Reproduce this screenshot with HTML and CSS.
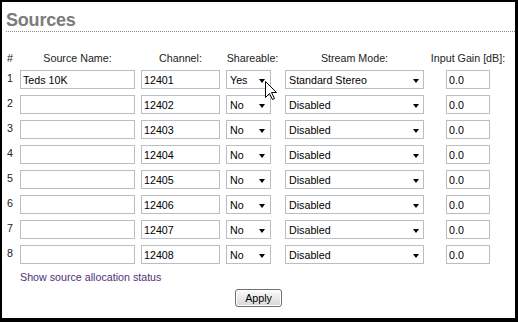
FILE: index.html
```html
<!DOCTYPE html>
<html>
<head>
<meta charset="utf-8">
<link rel="stylesheet" href="styles.css">
</head>
<body>
<div class="frame">
  <h1 class="title">Sources</h1>
  <form class="sources">
    <div class="grid">
      <span class="hd hd-num">#</span>
      <span class="hd">Source Name:</span>
      <span class="hd">Channel:</span>
      <span class="hd">Shareable:</span>
      <span class="hd">Stream Mode:</span>
      <span class="hd">Input Gain [dB]:</span>

      <span class="num">1</span>
      <input class="in in-name" value="Teds 10K">
      <input class="in in-chan" value="12401">
      <span class="sel sel-share"><select><option>Yes</option></select></span>
      <span class="sel sel-mode"><select><option>Standard Stereo</option></select></span>
      <input class="in in-gain" value="0.0">

      <span class="num">2</span>
      <input class="in in-name" value="">
      <input class="in in-chan" value="12402">
      <span class="sel sel-share"><select><option>No</option></select></span>
      <span class="sel sel-mode"><select><option>Disabled</option></select></span>
      <input class="in in-gain" value="0.0">

      <span class="num">3</span>
      <input class="in in-name" value="">
      <input class="in in-chan" value="12403">
      <span class="sel sel-share"><select><option>No</option></select></span>
      <span class="sel sel-mode"><select><option>Disabled</option></select></span>
      <input class="in in-gain" value="0.0">

      <span class="num">4</span>
      <input class="in in-name" value="">
      <input class="in in-chan" value="12404">
      <span class="sel sel-share"><select><option>No</option></select></span>
      <span class="sel sel-mode"><select><option>Disabled</option></select></span>
      <input class="in in-gain" value="0.0">

      <span class="num">5</span>
      <input class="in in-name" value="">
      <input class="in in-chan" value="12405">
      <span class="sel sel-share"><select><option>No</option></select></span>
      <span class="sel sel-mode"><select><option>Disabled</option></select></span>
      <input class="in in-gain" value="0.0">

      <span class="num">6</span>
      <input class="in in-name" value="">
      <input class="in in-chan" value="12406">
      <span class="sel sel-share"><select><option>No</option></select></span>
      <span class="sel sel-mode"><select><option>Disabled</option></select></span>
      <input class="in in-gain" value="0.0">

      <span class="num">7</span>
      <input class="in in-name" value="">
      <input class="in in-chan" value="12407">
      <span class="sel sel-share"><select><option>No</option></select></span>
      <span class="sel sel-mode"><select><option>Disabled</option></select></span>
      <input class="in in-gain" value="0.0">

      <span class="num">8</span>
      <input class="in in-name" value="">
      <input class="in in-chan" value="12408">
      <span class="sel sel-share"><select><option>No</option></select></span>
      <span class="sel sel-mode"><select><option>Disabled</option></select></span>
      <input class="in in-gain" value="0.0">
    </div>
    <a class="status-link" href="#">Show source allocation status</a>
    <div class="actions"><button type="button" class="btn">Apply</button></div>
  </form>
  <svg class="cursor" width="13" height="20" viewBox="0 0 13 20">
    <polygon points="0.5,0.5 0.5,16.5 4.5,12.5 7.5,18.5 9.5,17.5 6.5,11.5 11.5,11.5" fill="#fff" stroke="#000" stroke-width="1" stroke-linejoin="miter"/>
  </svg>
</div>
</body>
</html>
```
FILE: styles.css
```css
* { box-sizing: border-box; }
html, body { margin: 0; padding: 0; background: #000; }
body { width: 518px; height: 322px; overflow: hidden; }

.frame {
  position: relative;
  width: 518px;
  height: 322px;
  background: #fff;
  border-style: solid;
  border-color: #000;
  border-width: 2px 3px 4px 2px;
  padding-top: 7px;
  font-family: "Liberation Sans", Arial, sans-serif;
  font-size: 10.7px;
  color: #222;
}

.title {
  margin: 0 0 0 4px;
  font-size: 18px;
  line-height: 22px;
  font-weight: bold;
  color: #7b7b7b;
  letter-spacing: -0.2px;
  border-bottom: 1px dotted #8a8a8a;
}

.sources {
  margin: 20px 0 0 0;
  padding-left: 5px;
}

.grid {
  display: grid;
  grid-template-columns: 7px 115px 79px 53px 139px 76px;
  column-gap: 6px;
  row-gap: 6px;
  grid-auto-rows: auto;
}

.hd {
  line-height: 12px;
  text-align: center;
  white-space: nowrap;
  color: #222;
}
.hd-num { text-align: left; }

.num {
  line-height: 13px;
  padding-top: 2px;
  color: #222;
}

.in {
  height: 19px;
  margin: 0;
  border: 1px solid #babec3;
  padding: 1px 2px 0 2px;
  font-family: "Liberation Sans", Arial, sans-serif;
  font-size: 10.7px;
  color: #000;
  background: #fff;
  outline: none;
}
.in-name { width: 115px; }
.in-chan { width: 79px; }
.in-gain { width: 44px; justify-self: center; }

.sel {
  position: relative;
  display: block;
  height: 19px;
}
.sel select {
  -webkit-appearance: none;
  appearance: none;
  display: block;
  width: 100%;
  height: 19px;
  margin: 0;
  border: 1px solid #babec3;
  border-radius: 0;
  background: #fff;
  padding: 1px 14px 0 3px;
  font-family: "Liberation Sans", Arial, sans-serif;
  font-size: 10.7px;
  color: #000;
  outline: none;
}
.sel::after {
  content: "";
  position: absolute;
  right: 6px;
  top: 9px;
  width: 0;
  height: 0;
  border-top: 4px solid #000;
  border-left: 3.5px solid transparent;
  border-right: 3.5px solid transparent;
  pointer-events: none;
}
.sel-share { width: 45px; }
.sel-mode { width: 139px; }
.sel-mode::after { right: 5px; }

.status-link {
  display: inline-block;
  margin: 7px 0 0 13px;
  line-height: 13px;
  color: #50307a;
  text-decoration: none;
}

.actions {
  display: flex;
  justify-content: center;
  margin-top: 5px;
  padding-right: 5px;
}

.btn {
  width: 47px;
  height: 18px;
  margin: 0;
  padding: 0;
  border: 1px solid #6f6f6f;
  border-radius: 3px;
  background: linear-gradient(#fbfbfb, #e6e6e6 60%, #d6d6d6);
  box-shadow: inset 0 0 0 1px #fff;
  font-family: "Liberation Sans", Arial, sans-serif;
  font-size: 10.7px;
  line-height: 15px;
  color: #000;
}

.cursor {
  position: absolute;
  left: 263px;
  top: 79px;
}
```
